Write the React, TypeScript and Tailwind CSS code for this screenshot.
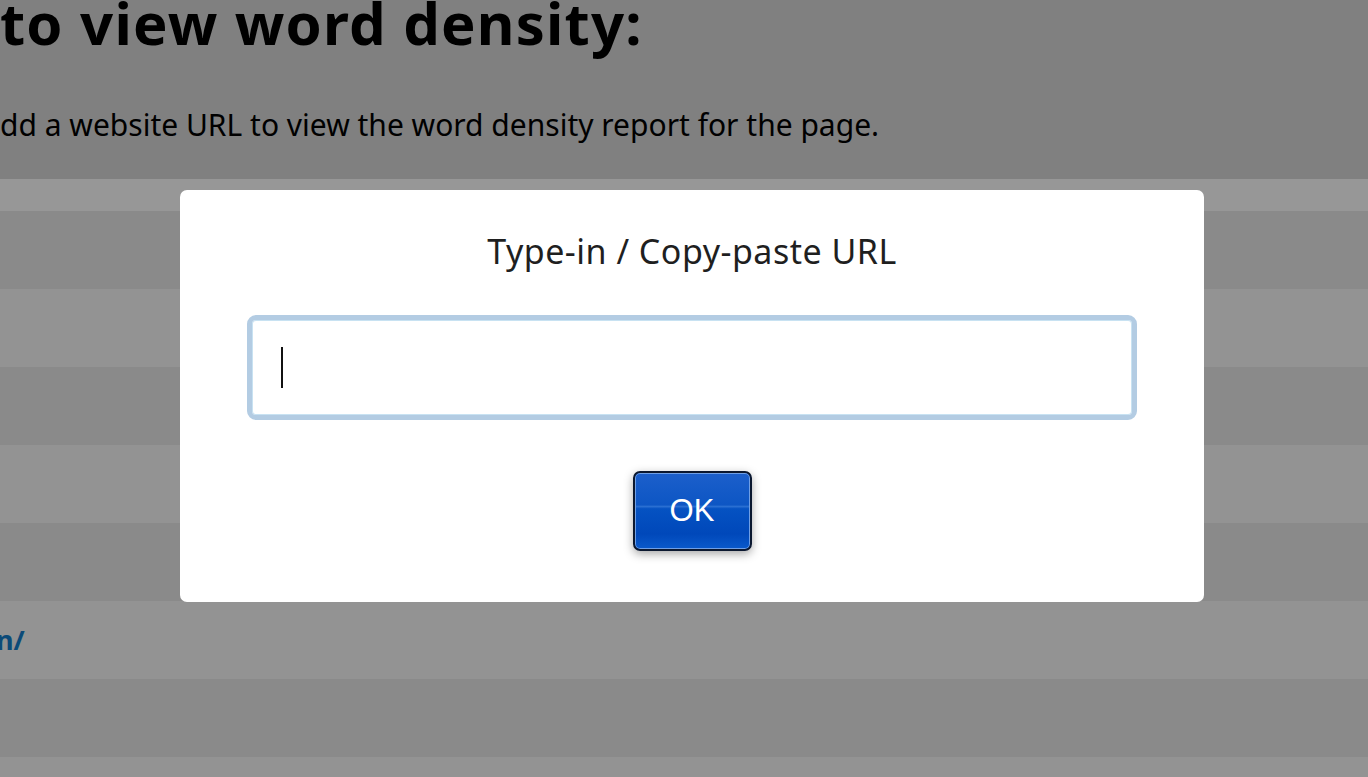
import React from 'react';

const rows = [
  { bg: 'bg-[#8a8a8a]', text: '' },
  { bg: 'bg-[#939393]', text: '' },
  { bg: 'bg-[#8a8a8a]', text: '' },
  { bg: 'bg-[#939393]', text: '' },
  { bg: 'bg-[#8a8a8a]', text: '' },
  { bg: 'bg-[#939393]', text: 'n/' },
  { bg: 'bg-[#8a8a8a]', text: '' },
  { bg: 'bg-[#939393]', text: '' },
];

const UrlDialog = () => {
  return (
    <div className="absolute left-[180px] top-[190px] flex h-[412px] w-[1024px] flex-col items-center rounded-[7px] bg-white">
      <h2 className="mt-[33px] font-['Noto_Sans',sans-serif] text-[34px] leading-[56px] tracking-[0.5px] text-[#1f1f1f]">
        Type-in / Copy-paste URL
      </h2>
      <div className="mt-[36px] flex h-[105px] w-[890px] items-center rounded-[9px] border-[5px] border-[#b3cce3] bg-white px-[29px] shadow-[inset_0_0_0_1px_#c8e2f2]">
        <span className="block h-[41px] w-[2px] bg-[#111]" />
      </div>
      <button
        type="button"
        className="mt-[51px] flex h-[80px] w-[119px] items-center justify-center rounded-[7px] border-2 border-[#0b1830] bg-[linear-gradient(180deg,#1c5fcb_0%,#0d56c4_42%,#2a6fd2_44%,#0552c2_47%,#0048ba_80%,#0a5acc_100%)] font-['Liberation_Sans',Arial,sans-serif] text-[31px] text-white shadow-[0_3px_10px_rgba(0,0,0,0.35),inset_0_0_0_1px_#6f9fe6]"
      >
        OK
      </button>
    </div>
  );
};

export default function App() {
  return (
    <div className="relative h-[777px] w-[1368px] overflow-hidden bg-[#808080] font-['Noto_Sans',sans-serif]">
      <div className="flex h-[179px] flex-col">
        <h1 className="-mt-[6px] whitespace-nowrap text-[58px] font-bold leading-[58px] tracking-[1.2px] text-black">
          to view word density:
        </h1>
        <p className="mt-[55px] whitespace-nowrap text-[30px] leading-[36px] text-black">
          dd a website URL to view the word density report for the page.
        </p>
      </div>
      <div className="h-[32px] bg-[#979797]" />
      {rows.map((r, i) => (
        <div key={i} className={`h-[78px] ${r.bg} flex items-center`}>
          {r.text && (
            <span className="-ml-[4px] text-[27px] font-bold text-[#0b4a78]">{r.text}</span>
          )}
        </div>
      ))}
      <UrlDialog />
    </div>
  );
}
